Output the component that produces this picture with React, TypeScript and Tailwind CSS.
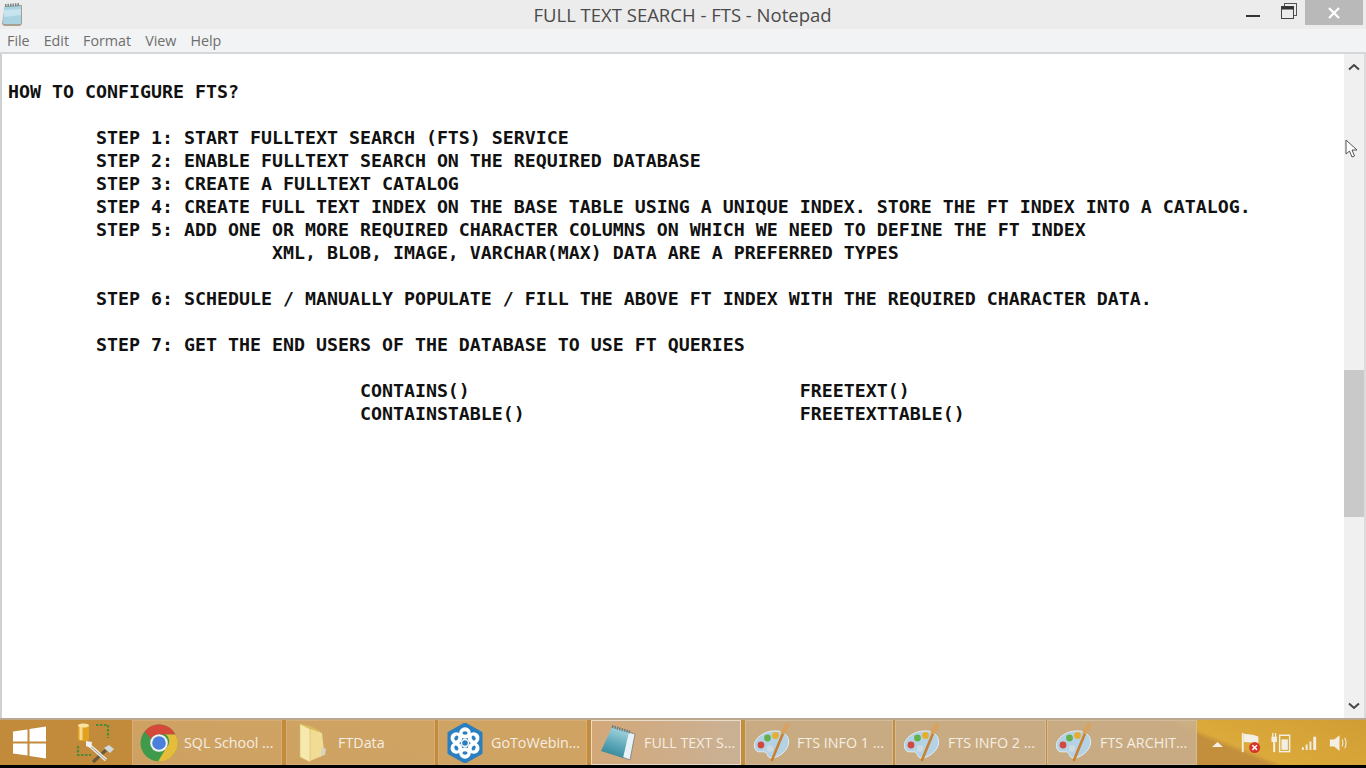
import React from "react";

const TEXT = `
HOW TO CONFIGURE FTS?

        STEP 1: START FULLTEXT SEARCH (FTS) SERVICE
        STEP 2: ENABLE FULLTEXT SEARCH ON THE REQUIRED DATABASE
        STEP 3: CREATE A FULLTEXT CATALOG
        STEP 4: CREATE FULL TEXT INDEX ON THE BASE TABLE USING A UNIQUE INDEX. STORE THE FT INDEX INTO A CATALOG.
        STEP 5: ADD ONE OR MORE REQUIRED CHARACTER COLUMNS ON WHICH WE NEED TO DEFINE THE FT INDEX
                        XML, BLOB, IMAGE, VARCHAR(MAX) DATA ARE A PREFERRED TYPES

        STEP 6: SCHEDULE / MANUALLY POPULATE / FILL THE ABOVE FT INDEX WITH THE REQUIRED CHARACTER DATA.

        STEP 7: GET THE END USERS OF THE DATABASE TO USE FT QUERIES

                                CONTAINS()                              FREETEXT()
                                CONTAINSTABLE()                         FREETEXTTABLE()`;

function TitleIcon() {
  return (
    <svg width="22" height="24" viewBox="0 0 22 24">
      <path d="M4 4 L21 3 L21 22 L19 24 L3 24 L1 22 Z" fill="#a89f8e" />
      <path d="M3 5 L20 4 L20 22 L2 22 Z" fill="#a9d3e2" />
      <path d="M3 8 L20 7 L20 13 L3 15 Z" fill="#c7e4ee" />
      <path d="M4 3.5 L19 2.5" stroke="#77858a" strokeWidth="3" strokeDasharray="1.5 1" />
    </svg>
  );
}

function NotepadIcon() {
  return (
    <svg width="38" height="38" viewBox="0 0 38 38">
      <defs>
        <linearGradient id="padg" x1="0.6" y1="0" x2="0.3" y2="1">
          <stop offset="0" stopColor="#a4d6df" />
          <stop offset="0.55" stopColor="#5ba6b8" />
          <stop offset="1" stopColor="#2f8394" />
        </linearGradient>
      </defs>
      <path d="M29 8 L36 10 L31 36 L23 33 Z" fill="#e9f2f6" stroke="#6f7d80" strokeWidth="0.8" />
      <path d="M13 3 L30 8 L24 34 L2 27 Z" fill="url(#padg)" />
      <path d="M13 2.5 L31 8" stroke="#6b7a7c" strokeWidth="3" strokeDasharray="1.5 1" />
    </svg>
  );
}

function PaletteIcon() {
  return (
    <svg width="38" height="40" viewBox="0 0 38 40">
      <path d="M1.5 24 C0 15 12 8 21 8 C30 7 37 13 35.5 21 C34 28 26 35 18 35 C14 35 15 30 12 29 C8 28 3 31 1.5 24 Z" fill="#b4d2e6" stroke="#e2edf4" strokeWidth="1" />
      <circle cx="8" cy="22" r="3.4" fill="#d2483f" />
      <circle cx="14.5" cy="15" r="3.4" fill="#65b04a" />
      <circle cx="22.5" cy="12.5" r="3.4" fill="#e6ae2f" />
      <circle cx="17" cy="25.5" r="3.2" fill="#cfdbe2" />
      <path d="M19 37 L31 8" stroke="#c9802f" strokeWidth="2.6" strokeLinecap="round" />
      <path d="M30 9 L34 2.5" stroke="#d9a35e" strokeWidth="4.4" strokeLinecap="round" />
    </svg>
  );
}

function ChromeIcon() {
  return (
    <svg width="38" height="38" viewBox="0 0 38 38">
      <circle cx="19" cy="19" r="18.5" fill="#3f9a4c" />
      <path d="M19 0.5 A18.5 18.5 0 0 1 35.5 10.5 L19 10.5 A8.5 8.5 0 0 0 11.5 15 L4.5 7.5 A18.5 18.5 0 0 1 19 0.5 Z" fill="#d5493a" />
      <path d="M35.5 10.5 A18.5 18.5 0 0 1 18 37.5 L26.5 23.5 A8.5 8.5 0 0 0 26 10.5 Z" fill="#e6bd3a" />
      <circle cx="19" cy="19" r="8.8" fill="#f2f2f2" />
      <circle cx="19" cy="19" r="6.8" fill="#4a80dc" />
    </svg>
  );
}

function FolderIcon() {
  return (
    <svg width="30" height="40" viewBox="0 0 30 40">
      <path d="M2 1 L12 3 L22 8 L26 30 L22 34 L2 28 Z" fill="#d9bb60" />
      <path d="M12 6 L24 10 L26 28 L24 33 L12 38 Z" fill="#f0dc94" />
      <path d="M2 1 L12 6 L12 39 L2 34 Z" fill="#f7e9ae" stroke="#d9bd62" strokeWidth="0.6" />
      <path d="M24 24 L28 26 L27 32 L23 33 Z" fill="#d8d4bf" />
    </svg>
  );
}

function WebinarIcon() {
  const angles = [0, 60, 120, 180, 240, 300];
  return (
    <svg width="36" height="40" viewBox="0 0 36 40">
      <path d="M18 1 L34 10 L34 30 L18 39 L2 30 L2 10 Z" fill="#2a7fc0" stroke="#2a7fc0" strokeWidth="3" strokeLinejoin="round" />
      {angles.map((a) => (
        <g key={a} transform={`rotate(${a} 18 20)`}>
          <circle cx="18" cy="10" r="5.8" fill="#ffffff" />
          <ellipse cx="18" cy="10" rx="2.6" ry="1.8" fill="#2a7fc0" />
        </g>
      ))}
      <circle cx="18" cy="20" r="4.2" fill="#ffffff" />
      <circle cx="18" cy="20" r="2.8" fill="#2a7fc0" />
    </svg>
  );
}

function ToolsIcon() {
  return (
    <svg width="44" height="44" viewBox="0 0 44 44">
      <path d="M4 5 C4 2 15 2 15 5 L15 18 C15 21 4 21 4 18 Z" fill="#e3a21d" />
      <ellipse cx="9.5" cy="4.5" rx="5.5" ry="2" fill="#f8e3a0" />
      <path d="M7 6 L7 19" stroke="#f7dc90" strokeWidth="3" />
      <path d="M22 4 L34 4 L34 17" stroke="#4d8a38" strokeWidth="2.2" strokeDasharray="2.5 1.5" fill="none" />
      <path d="M4 25 L4 34 L17 34" stroke="#4d8a38" strokeWidth="2.2" strokeDasharray="2.5 1.5" fill="none" />
      <path d="M19 41 L32 29" stroke="#6b5a3a" strokeWidth="3.2" />
      <path d="M14 23 L32 39" stroke="#ecebe2" strokeWidth="3.4" />
      <path d="M14 23 L32 39" stroke="#8b8678" strokeWidth="0.8" />
      <path d="M30 27 L35 24 L40 28 L36 32 Z" fill="#cfd9df" />
      <path d="M12 20 L18 21 L17 27 L12 25 Z" fill="#eef2f4" />
    </svg>
  );
}

function TaskButton({ icon, label, className, col }: { icon: React.ReactNode; label: string; className: string; col: string }) {
  return (
    <div className={`h-[45px] flex items-center shrink-0 border ${className}`}>
      <span className={`${col} flex justify-center shrink-0`}>{icon}</span>
      <span className="text-[14.3px] text-[#f5eee2] whitespace-nowrap">{label}</span>
    </div>
  );
}

export default function App() {
  const warm = "border-[#d6ad78] bg-white/20";
  const tan = "border-[#d2bb9a] bg-[#c9ae8a]/90";
  return (
    <div className="w-[1366px] h-[768px] flex flex-col overflow-hidden bg-white font-['Open_Sans',sans-serif]">
      {/* title bar */}
      <div className="h-[29px] shrink-0 bg-[#ececec] flex items-start">
        <span className="ml-[1px] mt-[2px] shrink-0"><TitleIcon /></span>
        <span className="flex-1 text-center text-[18.5px] leading-[30px] text-[#4a4a4a] pl-[96px]">FULL TEXT SEARCH - FTS - Notepad</span>
        <div className="flex items-start shrink-0">
          <svg width="16" height="20" viewBox="0 0 16 20" className="mr-[19px]"><rect x="0" y="15" width="14" height="2" fill="#333" /></svg>
          <svg width="18" height="20" viewBox="0 0 18 20" className="mr-[6px] mt-[3px]">
            <rect x="3.5" y="0.5" width="12" height="12" fill="#ececec" stroke="#555" />
            <rect x="0.5" y="3.5" width="12" height="12" fill="#ececec" stroke="#444" />
            <rect x="0.5" y="3.5" width="12" height="3" fill="#333" />
          </svg>
          <div className="w-[58px] h-[25px] mr-[3px] bg-[#b9b9b9] flex items-center justify-center">
            <svg width="12" height="12" viewBox="0 0 12 12"><path d="M1 1 L11 11 M11 1 L1 11" stroke="#fff" strokeWidth="2.2" /></svg>
          </div>
        </div>
      </div>
      {/* menu bar */}
      <div className="h-[25px] shrink-0 bg-[#f2f3f4] border-b-2 border-[#d6d7d8] flex items-center gap-[14px] pl-[7px] pt-[1px] text-[14.3px] text-[#6e6e6e]">
        <span>File</span><span>Edit</span><span>Format</span><span>View</span><span>Help</span>
      </div>
      {/* editor */}
      <div className="flex-1 min-h-0 flex border-l-2 border-[#d0d0d0] relative">
        <pre className="flex-1 min-w-0 pl-[6px] pt-[3px] text-[18.27px] leading-[23px] font-bold text-[#111] font-['DejaVu_Sans_Mono',monospace]">{TEXT}</pre>
        <div className="w-[20px] shrink-0 bg-[#f0f0f0] flex flex-col items-center">
          <svg width="12" height="8" viewBox="0 0 12 8" className="mt-[9px]"><path d="M1 6.5 L6 2 L11 6.5" stroke="#444" strokeWidth="2" fill="none" /></svg>
          <div className="mt-[299px] w-full h-[147px] bg-[#c9c9c9]" />
          <div className="flex-1" />
          <svg width="12" height="8" viewBox="0 0 12 8" className="mb-[8px]"><path d="M1 1.5 L6 6 L11 1.5" stroke="#444" strokeWidth="2" fill="none" /></svg>
        </div>
        <div className="w-[2px] shrink-0 bg-[#dcdcdc]" />
        {/* mouse pointer */}
        <svg width="14" height="20" viewBox="0 0 14 20" className="absolute left-[1343px] top-[85px]">
          <path d="M1 1 L1 15 L4.5 12 L7 18 L9.5 17 L7 11 L12 11 Z" fill="#fff" stroke="#555" strokeWidth="1" />
        </svg>
      </div>
      {/* taskbar */}
      <div className="h-[47px] shrink-0 flex items-center border-t-2 border-[#b9a88c] bg-[linear-gradient(22deg,#c28a3b_0%,#c48f3c_86%,#dcaa3a_87%,#cf9d34_100%)]">
        <div className="w-[132px] h-full shrink-0 flex items-center">
          <svg width="33" height="33" viewBox="0 0 33 33" className="ml-[13px]">
            <path d="M0 5.5 L14.5 3.5 L14.5 15.5 L0 15.5 Z M16.5 3 L33 0.5 L33 15.5 L16.5 15.5 Z M0 17.5 L14.5 17.5 L14.5 29.5 L0 27.5 Z M16.5 17.5 L33 17.5 L33 32.5 L16.5 30 Z" fill="#fff" />
          </svg>
          <span className="ml-[28px]"><ToolsIcon /></span>
        </div>
        <TaskButton col="w-[51px]" icon={<ChromeIcon />} label="SQL School ..." className={`w-[150px] ${warm}`} />
        <TaskButton col="w-[51px]" icon={<FolderIcon />} label="FTData" className={`w-[149px] ml-[4px] ${warm}`} />
        <TaskButton col="w-[52px]" icon={<WebinarIcon />} label="GoToWebin..." className={`w-[149px] ml-[3px] ${warm}`} />
        <TaskButton col="w-[52px]" icon={<NotepadIcon />} label="FULL TEXT S..." className="w-[150px] ml-[4px] border-[#e8dccb] bg-[linear-gradient(100deg,#d3a878,#c9b196)]" />
        <TaskButton col="w-[51px]" icon={<PaletteIcon />} label="FTS INFO 1 ..." className={`w-[148px] ml-[4px] ${tan}`} />
        <TaskButton col="w-[52px]" icon={<PaletteIcon />} label="FTS INFO 2 ..." className={`w-[151px] ml-[2px] ${tan}`} />
        <TaskButton col="w-[52px]" icon={<PaletteIcon />} label="FTS ARCHIT..." className={`w-[150px] ml-[1px] ${tan}`} />
        <div className="flex-1 h-full flex items-center">
          <svg width="11" height="5" viewBox="0 0 11 5" className="ml-[15px] mt-[3px]"><path d="M0 5 L5.5 0 L11 5 Z" fill="#f4f0e6" /></svg>
          <svg width="22" height="22" viewBox="0 0 24 24" className="ml-[17px]">
            <path d="M3 1 L3 22" stroke="#f3efe4" strokeWidth="2" />
            <path d="M4 2 L14 3 L20 5 L20 12 L4 11 Z" fill="#f3efe4" />
            <circle cx="16" cy="17" r="6" fill="#d8352c" />
            <path d="M13.5 14.5 L18.5 19.5 M18.5 14.5 L13.5 19.5" stroke="#fff" strokeWidth="1.6" />
          </svg>
          <svg width="20" height="22" viewBox="0 0 22 24" className="ml-[9px]">
            <path d="M2 1 V5 M5 1 V5" stroke="#f3efe4" strokeWidth="1.4" />
            <rect x="0.5" y="5" width="6" height="6" fill="#f3efe4" />
            <rect x="2.4" y="11" width="2.2" height="11" fill="#f3efe4" />
            <rect x="9.5" y="3.5" width="11" height="18" fill="none" stroke="#f3efe4" strokeWidth="1.6" />
            <rect x="11.5" y="8" width="7" height="11.5" fill="#f3efe4" />
          </svg>
          <svg width="17" height="17" viewBox="0 0 18 18" className="ml-[10px]">
            <path d="M1 14 h2 v3 h-2 z M5 11 h2 v6 h-2 z M9 8 h2 v9 h-2 z M13 3 h3 v14 h-3 z" fill="#f3efe4" />
          </svg>
          <svg width="21" height="20" viewBox="0 0 24 22" className="ml-[11px]">
            <path d="M1 7 H6 L12 2 V20 L6 15 H1 Z" fill="#f3efe4" />
            <path d="M15 7 Q17 11 15 15 M18 5 Q21 11 18 17" stroke="#f3efe4" strokeWidth="1.2" fill="none" />
          </svg>
        </div>
      </div>
      <div className="h-[3px] shrink-0 bg-black" />
    </div>
  );
}
